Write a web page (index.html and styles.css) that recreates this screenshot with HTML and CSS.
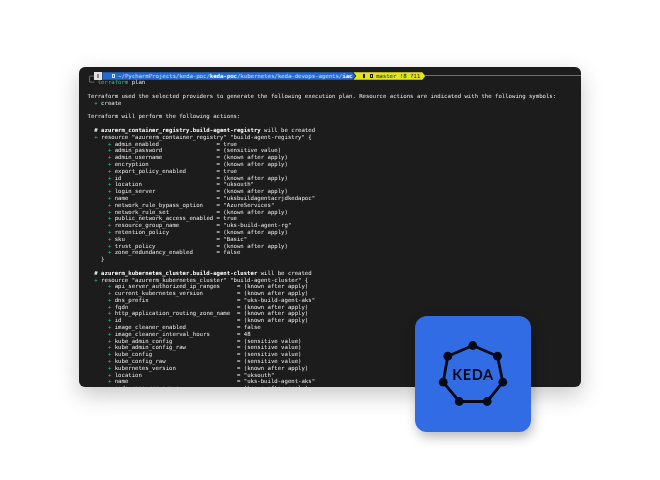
FILE: index.html
```html
<!DOCTYPE html>
<html lang="en">
<head>
<meta charset="utf-8">
<title>Terraform plan with KEDA</title>
<link rel="stylesheet" href="styles.css">
</head>
<body>
<main class="stage">
<section class="terminal">
<div class="prompt"><span class="corner">╭─</span><span class="seg seg-os"><i class="tofu"></i></span><span class="seg seg-path"><i class="tofu"></i> ~/PycharmProjects/keda-poc/<b>keda-poc</b>/kubernetes/keda-devops-agents/<b>iac</b></span><span class="seg seg-git"><i class="tofu"></i><i class="tofu tofu-next"></i> master !8 ?11</span><span class="rule"></span></div>
<pre class="output"><span class="corner">╰─</span> <span class="cmd">terraform</span> plan

Terraform used the selected providers to generate the following execution plan. Resource actions are indicated with the following symbols:
  <span class="add">+</span> create

Terraform will perform the following actions:

  <b># azurerm_container_registry.build-agent-registry</b> will be created
  <span class="add">+</span> resource "azurerm_container_registry" "build-agent-registry" {
      <span class="add">+</span> admin_enabled                 = true
      <span class="add">+</span> admin_password                = (sensitive value)
      <span class="add">+</span> admin_username                = (known after apply)
      <span class="add">+</span> encryption                    = (known after apply)
      <span class="add">+</span> export_policy_enabled         = true
      <span class="add">+</span> id                            = (known after apply)
      <span class="add">+</span> location                      = "uksouth"
      <span class="add">+</span> login_server                  = (known after apply)
      <span class="add">+</span> name                          = "uksbuildagentacrjdkedapoc"
      <span class="add">+</span> network_rule_bypass_option    = "AzureServices"
      <span class="add">+</span> network_rule_set              = (known after apply)
      <span class="add">+</span> public_network_access_enabled = true
      <span class="add">+</span> resource_group_name           = "uks-build-agent-rg"
      <span class="add">+</span> retention_policy              = (known after apply)
      <span class="add">+</span> sku                           = "Basic"
      <span class="add">+</span> trust_policy                  = (known after apply)
      <span class="add">+</span> zone_redundancy_enabled       = false
    }

  <b># azurerm_kubernetes_cluster.build-agent-cluster</b> will be created
  <span class="add">+</span> resource "azurerm_kubernetes_cluster" "build-agent-cluster" {
      <span class="add">+</span> api_server_authorized_ip_ranges     = (known after apply)
      <span class="add">+</span> current_kubernetes_version          = (known after apply)
      <span class="add">+</span> dns_prefix                          = "uks-build-agent-aks"
      <span class="add">+</span> fqdn                                = (known after apply)
      <span class="add">+</span> http_application_routing_zone_name  = (known after apply)
      <span class="add">+</span> id                                  = (known after apply)
      <span class="add">+</span> image_cleaner_enabled               = false
      <span class="add">+</span> image_cleaner_interval_hours        = 48
      <span class="add">+</span> kube_admin_config                   = (sensitive value)
      <span class="add">+</span> kube_admin_config_raw               = (sensitive value)
      <span class="add">+</span> kube_config                         = (sensitive value)
      <span class="add">+</span> kube_config_raw                     = (sensitive value)
      <span class="add">+</span> kubernetes_version                  = (known after apply)
      <span class="add">+</span> location                            = "uksouth"
      <span class="add">+</span> name                                = "uks-build-agent-aks"
      <span class="add">+</span> node_resource_group                 = (known after apply)</pre>
</section>
<div class="badge">
<svg class="logo" viewBox="0 0 70 70" role="img" aria-label="KEDA">
<polygon class="ring" points="34.8,6.5 59.5,17.2 64.8,43.2 49.2,62.5 21.2,62.5 5.2,43.2 9.8,17.2"/>
<g class="nodes">
<circle cx="34.8" cy="6.5" r="4.4"/><circle cx="59.5" cy="17.2" r="4.4"/><circle cx="64.8" cy="43.2" r="4.4"/><circle cx="49.2" cy="62.5" r="4.4"/><circle cx="21.2" cy="62.5" r="4.4"/><circle cx="5.2" cy="43.2" r="4.4"/><circle cx="9.8" cy="17.2" r="4.4"/>
</g>
<text class="wordmark" x="35" y="41.3" text-anchor="middle">KEDA</text>
</svg>
</div>
</main>
</body>
</html>
```
FILE: styles.css
```css
html, body {
  margin: 0;
  background: #fff;
}
.stage {
  position: relative;
  width: 660px;
  height: 480px;
  padding: 67px 0 0 79px;
  box-sizing: border-box;
  overflow: hidden;
}
.terminal {
  width: 502px;
  height: 319.5px;
  box-sizing: border-box;
  padding: 5.6px 0 0 8.5px;
  background: #1c1c1c;
  border-radius: 6px;
  overflow: hidden;
  box-shadow: 0 8px 22px rgba(0, 0, 0, .22);
  font: 5.65px/6.8px "DejaVu Sans Mono", monospace;
  color: #ececec;
}
.output {
  margin: 0;
  font: inherit;
  filter: blur(.25px);
}
.output b { color: #fff; }
.add, .cmd { color: #36c08f; }
.corner { color: #a8a8a8; }
.prompt {
  display: flex;
  align-items: center;
  height: 6.8px;
  white-space: pre;
  filter: blur(.25px);
}
.seg {
  display: flex;
  align-items: center;
  height: 7.4px;
  white-space: pre;
  flex: none;
}
.seg-os {
  width: 8px;
  padding-left: 2.5px;
  box-sizing: border-box;
  background: #e2e2e2;
  color: #8a8a8a;
}
.seg-path {
  width: 253px;
  box-sizing: border-box;
  padding-left: 10px;
  background: #2468d2;
  color: #d5e2f6;
  clip-path: polygon(0 0, calc(100% - 3px) 0, 100% 50%, calc(100% - 3px) 100%, 0 100%);
}
.seg-path b { color: #fff; }
.seg-git {
  width: 72px;
  margin-left: -2px;
  box-sizing: border-box;
  padding-left: 9.5px;
  background: #e3e31f;
  color: #1b1b05;
  clip-path: polygon(0 0, calc(100% - 3px) 0, 100% 50%, calc(100% - 3px) 100%, 0 100%, 3px 50%);
}
.tofu {
  display: inline-block;
  width: 2.4px;
  height: 4.6px;
  border: .6px solid currentColor;
  box-sizing: border-box;
}
.tofu-next { margin-left: 5px; }
.rule {
  flex: 1;
  height: 1px;
  background: #6f6f6f;
}
.badge {
  position: absolute;
  left: 414.5px;
  top: 315.5px;
  width: 116px;
  height: 116px;
  display: flex;
  align-items: center;
  justify-content: center;
  background: #326ce5;
  border-radius: 12px;
  box-shadow: 2px 5px 12px rgba(0, 0, 0, .28);
}
.logo {
  width: 70px;
  height: 70px;
  overflow: visible;
}
.ring {
  fill: none;
  stroke: #050a16;
  stroke-width: 2.8;
}
.nodes { fill: #050a16; }
.wordmark {
  font: 700 14.5px Lato, sans-serif;
  letter-spacing: .6px;
  fill: #050a16;
}
```
